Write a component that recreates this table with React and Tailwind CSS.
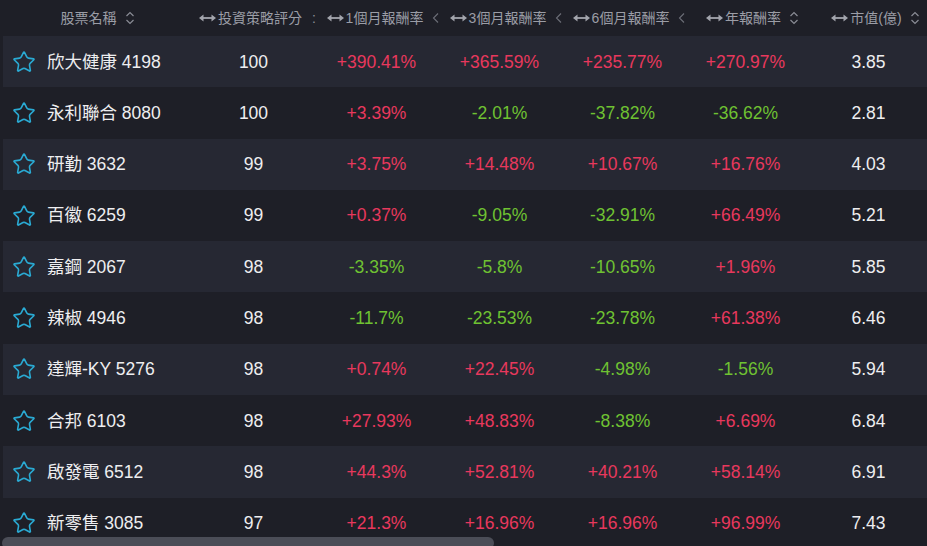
import { Star } from "lucide-react";

const rows = [
  { name: "欣大健康 4198", score: 100, m1: "+390.41%", m3: "+365.59%", m6: "+235.77%", yr: "+270.97%", cap: "3.85" },
  { name: "永利聯合 8080", score: 100, m1: "+3.39%", m3: "-2.01%", m6: "-37.82%", yr: "-36.62%", cap: "2.81" },
  { name: "研勤 3632", score: 99, m1: "+3.75%", m3: "+14.48%", m6: "+10.67%", yr: "+16.76%", cap: "4.03" },
  { name: "百徽 6259", score: 99, m1: "+0.37%", m3: "-9.05%", m6: "-32.91%", yr: "+66.49%", cap: "5.21" },
  { name: "嘉鋼 2067", score: 98, m1: "-3.35%", m3: "-5.8%", m6: "-10.65%", yr: "+1.96%", cap: "5.85" },
  { name: "辣椒 4946", score: 98, m1: "-11.7%", m3: "-23.53%", m6: "-23.78%", yr: "+61.38%", cap: "6.46" },
  { name: "達輝-KY 5276", score: 98, m1: "+0.74%", m3: "+22.45%", m6: "-4.98%", yr: "-1.56%", cap: "5.94" },
  { name: "合邦 6103", score: 98, m1: "+27.93%", m3: "+48.83%", m6: "-8.38%", yr: "+6.69%", cap: "6.84" },
  { name: "啟發電 6512", score: 98, m1: "+44.3%", m3: "+52.81%", m6: "+40.21%", yr: "+58.14%", cap: "6.91" },
  { name: "新零售 3085", score: 97, m1: "+21.3%", m3: "+16.96%", m6: "+16.96%", yr: "+96.99%", cap: "7.43" },
];

const font = { fontFamily: '"Liberation Sans", "Noto Sans CJK TC", sans-serif' };

function Resize() {
  return (
    <svg width="17" height="8" viewBox="0 0 17 8" className="mr-[2px] shrink-0">
      <line x1="3" y1="4" x2="14" y2="4" stroke="#a3a5ad" strokeWidth="1.8" />
      <path d="M0 4 L4.5 0.5 L4.5 7.5 Z" fill="#a3a5ad" />
      <path d="M17 4 L12.5 0.5 L12.5 7.5 Z" fill="#a3a5ad" />
    </svg>
  );
}

function UpDown() {
  return (
    <svg width="10" height="14" viewBox="0 0 10 14" className="ml-[8px] shrink-0">
      <path d="M1.5 5 L5 1.5 L8.5 5" fill="none" stroke="#8a8c95" strokeWidth="1.2" />
      <path d="M1.5 9 L5 12.5 L8.5 9" fill="none" stroke="#8a8c95" strokeWidth="1.2" />
    </svg>
  );
}

function Left() {
  return (
    <svg width="8" height="12" viewBox="0 0 8 12" className="ml-[9px] shrink-0">
      <path d="M6 1.5 L1.5 6 L6 10.5" fill="none" stroke="#6c6e77" strokeWidth="1.1" />
    </svg>
  );
}

function Head({ label, icon, resize = true, className = "w-[123px] pl-[14px]" }) {
  return (
    <div className={`${className} shrink-0 flex items-center justify-center text-[14px] text-[#9b9da6] whitespace-nowrap`}>
      {resize && <Resize />}
      <span>{label}</span>
      {icon}
    </div>
  );
}

function color(v) {
  return v.startsWith("-") ? "text-[#6fc232]" : "text-[#e8385d]";
}

export default function App() {
  return (
    <div className="relative w-[927px] h-[546px] overflow-hidden bg-[#1e1f27]" style={font}>
      <div className="flex h-[36px] ml-[3px]">
        <Head label="股票名稱" icon={<UpDown />} resize={false} className="w-[189px]" />
        <Head label="投資策略評分" icon={<span className="ml-[10px] text-[#8a8c95]">:</span>} className="w-[123px] pl-[8px]" />
        <Head label="1個月報酬率" icon={<Left />} />
        <Head label="3個月報酬率" icon={<Left />} />
        <Head label="6個月報酬率" icon={<Left />} />
        <Head label="年報酬率" icon={<UpDown />} />
        <Head label="市值(億)" icon={<UpDown />} />
      </div>
      {rows.map((r, i) => (
        <div
          key={r.name}
          className={`flex items-center h-[51.3px] ml-[3px] text-[17.5px] ${i % 2 === 0 ? "bg-[#262833]" : ""}`}
        >
          <div className="w-[189px] shrink-0 flex items-center pl-[9px]">
            <Star size={24} strokeWidth={1.6} color="#2aaad3" />
            <span className="ml-[11px] text-[#eeeef0] whitespace-nowrap">{r.name}</span>
          </div>
          <div className="w-[123px] shrink-0 text-center text-[#eeeef0]">{r.score}</div>
          <div className={`w-[123px] shrink-0 text-center ${color(r.m1)}`}>{r.m1}</div>
          <div className={`w-[123px] shrink-0 text-center ${color(r.m3)}`}>{r.m3}</div>
          <div className={`w-[123px] shrink-0 text-center ${color(r.m6)}`}>{r.m6}</div>
          <div className={`w-[123px] shrink-0 text-center ${color(r.yr)}`}>{r.yr}</div>
          <div className="w-[123px] shrink-0 text-center text-[#eeeef0]">{r.cap}</div>
        </div>
      ))}
      <div className="absolute left-[2px] -bottom-[3px] w-[492px] h-[12px] rounded-full bg-[#4b4d57]" />
    </div>
  );
}
